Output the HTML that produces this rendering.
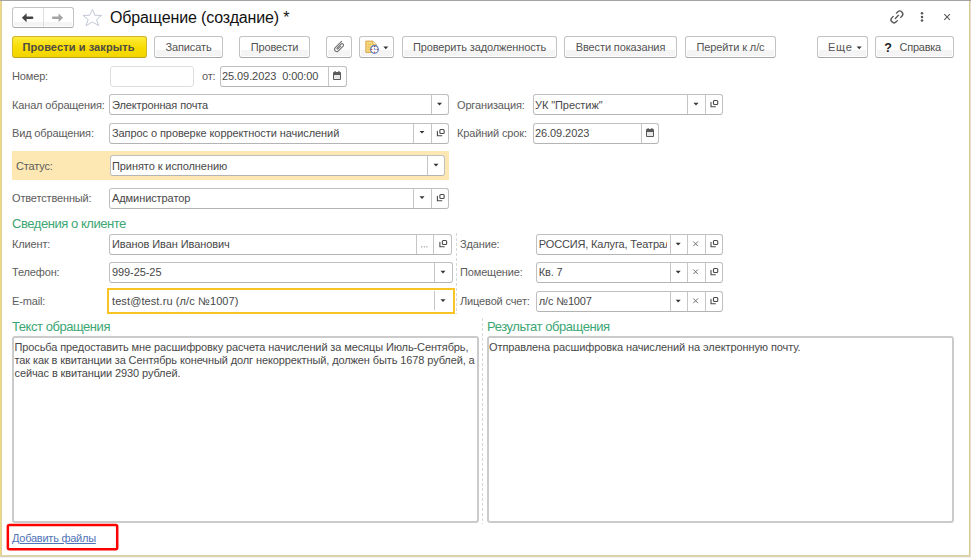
<!DOCTYPE html>
<html><head><meta charset="utf-8"><style>
*{box-sizing:border-box;margin:0;padding:0}
html,body{width:971px;height:558px;overflow:hidden;background:#fff}
body{position:relative;font-family:"Liberation Sans",sans-serif;font-size:11px;color:#333}
.a{position:absolute}
.t{position:absolute;white-space:pre;line-height:1}
.lbl{color:#5c5c5c}
.val{color:#484848}
.btn{position:absolute;border:1px solid #c3c3c3;border-bottom-color:#a8a8a8;border-radius:3px;
 background:linear-gradient(#fff 0,#fff 13px,#f4f4f4 13px,#f4f4f4 100%);box-shadow:inset 1px 0 #fff,inset -1px 0 #fff,inset 0 -1px #fff;
 color:#525252;text-align:center;white-space:pre;letter-spacing:-0.12px}
.fld{position:absolute;border:1px solid #c0c0c0;border-bottom-color:#b4b4b4;border-radius:3px;background:#fff}
.sec{color:#3ca673}
</style></head><body>
<div class="a" style="left:0px;top:0px;width:971px;height:1px;background:#a3a3a3"></div>
<div class="a" style="left:0px;top:1px;width:1px;height:556px;background:#f0d983"></div>
<div class="a" style="left:1px;top:1px;width:1px;height:554px;background:#dcd09e"></div>
<div class="a" style="left:969px;top:1px;width:1px;height:556px;background:#dbc98a"></div>
<div class="a" style="left:970px;top:1px;width:1px;height:556px;background:#e6ded2"></div>
<div class="a" style="left:0px;top:555px;width:970px;height:2px;background:#ddd3a6"></div>
<div class="a" style="left:0px;top:557px;width:971px;height:1px;background:#eef0f8"></div>
<div class="btn" style="left:12px;top:7px;width:62px;height:21px;background:linear-gradient(#fff 0,#fff 14px,#f4f4f4 14px,#f4f4f4 100%)"></div>
<div class="a" style="left:43px;top:8px;width:1px;height:19px;background:#dedede"></div>
<div class="t" style="left:110px;top:10.36px;font-size:16px;color:#111;letter-spacing:-0.14px">Обращение (создание) *</div>
<div class="btn" style="left:12px;top:36px;width:135px;height:22px;border-color:#cfb52a;border-bottom-color:#b8a020;background:linear-gradient(#ffeb3c,#f7dc00 55%,#f2d500);box-shadow:none;color:#4f4c44;font-weight:bold;line-height:20px;text-align:left;padding-left:9.5px;letter-spacing:0.1px">Провести и закрыть</div>
<div class="btn" style="left:154px;top:36px;width:69px;height:22px;line-height:20px;">Записать</div>
<div class="btn" style="left:239px;top:36px;width:71px;height:22px;line-height:20px;">Провести</div>
<div class="btn" style="left:326px;top:36px;width:26px;height:22px;line-height:20px;"></div>
<div class="btn" style="left:359px;top:36px;width:35px;height:22px;line-height:20px;"></div>
<div class="btn" style="left:402px;top:36px;width:155px;height:22px;line-height:20px;">Проверить задолженность</div>
<div class="btn" style="left:564px;top:36px;width:113px;height:22px;line-height:20px;">Ввести показания</div>
<div class="btn" style="left:685px;top:36px;width:91px;height:22px;line-height:20px;">Перейти к л/с</div>
<div class="btn" style="left:816.5px;top:36px;width:51.5px;height:22px;line-height:20px;text-align:left;padding-left:10.5px;letter-spacing:0.7px">Еще</div>
<div class="btn" style="left:875px;top:36px;width:79px;height:22px;line-height:20px;"></div>
<div class="t" style="left:884.3px;top:41.62px;font-size:12.5px;color:#1a1a1a;font-weight:bold">?</div>
<div class="t" style="left:899.5px;top:41.89px;font-size:11px;color:#525252;letter-spacing:-0.25px">Справка</div>
<div class="t lbl" style="left:12px;top:70.89px;font-size:11px;letter-spacing:-0.15px">Номер:</div>
<div class="fld" style="left:110px;top:66px;width:84px;height:21px;border-color:#dedede"></div>
<div class="t lbl" style="left:202px;top:70.89px;font-size:11px;letter-spacing:-0.15px">от:</div>
<div class="fld" style="left:220px;top:66px;width:127px;height:21px;"></div>
<div class="t val" style="left:222px;top:70.89px;font-size:11px;letter-spacing:-0.08px;">25.09.2023  0:00:00</div>
<div class="a" style="left:328px;top:67px;width:1px;height:19px;background:#c6c6c6"></div>
<div class="t lbl" style="left:12px;top:99.89px;font-size:11px;letter-spacing:-0.15px">Канал обращения:</div>
<div class="fld" style="left:109px;top:94px;width:340px;height:21px;"></div>
<div class="t val" style="left:112px;top:99.89px;font-size:11px;letter-spacing:-0.08px;letter-spacing:-0.12px">Электронная почта</div>
<div class="a" style="left:431px;top:95px;width:1px;height:19px;background:#c6c6c6"></div>
<div class="t lbl" style="left:457px;top:99.89px;font-size:11px;letter-spacing:-0.15px">Организация:</div>
<div class="fld" style="left:533px;top:94px;width:190px;height:21px;"></div>
<div class="t val" style="left:535px;top:99.89px;font-size:11px;letter-spacing:-0.08px;">УК "Престиж"</div>
<div class="a" style="left:687px;top:95px;width:1px;height:19px;background:#c6c6c6"></div>
<div class="a" style="left:704.5px;top:95px;width:1px;height:19px;background:#c6c6c6"></div>
<div class="t lbl" style="left:12px;top:127.89px;font-size:11px;letter-spacing:-0.15px">Вид обращения:</div>
<div class="fld" style="left:109px;top:123px;width:340px;height:21px;"></div>
<div class="t val" style="left:112px;top:127.89px;font-size:11px;letter-spacing:-0.08px;">Запрос о проверке корректности начислений</div>
<div class="a" style="left:413px;top:124px;width:1px;height:19px;background:#c6c6c6"></div>
<div class="a" style="left:431px;top:124px;width:1px;height:19px;background:#c6c6c6"></div>
<div class="t lbl" style="left:457px;top:127.89px;font-size:11px;letter-spacing:-0.15px">Крайний срок:</div>
<div class="fld" style="left:533px;top:123px;width:126px;height:21px;"></div>
<div class="t val" style="left:535px;top:127.89px;font-size:11px;letter-spacing:-0.08px;">26.09.2023</div>
<div class="a" style="left:641px;top:124px;width:1px;height:19px;background:#c6c6c6"></div>
<div class="a" style="left:12px;top:151px;width:437px;height:29px;background:#fde8b4"></div>
<div class="t lbl" style="left:16px;top:160.89px;font-size:11px;letter-spacing:-0.15px">Статус:</div>
<div class="fld" style="left:110px;top:155px;width:335px;height:21px;"></div>
<div class="t val" style="left:112px;top:160.89px;font-size:11px;letter-spacing:-0.08px;">Принято к исполнению</div>
<div class="a" style="left:427px;top:156px;width:1px;height:19px;background:#c6c6c6"></div>
<div class="t lbl" style="left:12px;top:192.89px;font-size:11px;letter-spacing:-0.15px">Ответственный:</div>
<div class="fld" style="left:109px;top:188px;width:340px;height:21px;"></div>
<div class="t val" style="left:112px;top:192.89px;font-size:11px;letter-spacing:-0.08px;">Администратор</div>
<div class="a" style="left:413px;top:189px;width:1px;height:19px;background:#c6c6c6"></div>
<div class="a" style="left:431px;top:189px;width:1px;height:19px;background:#c6c6c6"></div>
<div class="t sec" style="left:12px;top:216.9px;font-size:13px;letter-spacing:-0.45px">Сведения о клиенте</div>
<div class="t lbl" style="left:12px;top:238.89px;font-size:11px;letter-spacing:-0.15px">Клиент:</div>
<div class="fld" style="left:109px;top:234px;width:343px;height:21px;"></div>
<div class="t val" style="left:112px;top:238.89px;font-size:11px;letter-spacing:-0.08px;">Иванов Иван Иванович</div>
<div class="a" style="left:416px;top:235px;width:1px;height:19px;background:#c6c6c6"></div>
<div class="a" style="left:433px;top:235px;width:1px;height:19px;background:#c6c6c6"></div>
<div class="t lbl" style="left:12px;top:266.89px;font-size:11px;letter-spacing:-0.15px">Телефон:</div>
<div class="fld" style="left:109px;top:262px;width:344px;height:21px;"></div>
<div class="t val" style="left:112px;top:266.89px;font-size:11px;letter-spacing:-0.08px;">999-25-25</div>
<div class="a" style="left:434px;top:263px;width:1px;height:19px;background:#c6c6c6"></div>
<div class="t lbl" style="left:12px;top:295.89px;font-size:11px;letter-spacing:-0.15px">E-mail:</div>
<div class="a" style="left:107px;top:288px;width:348px;height:26px;border:2px solid #f7c423;background:#fff"></div>
<div class="t val" style="left:112px;top:295.89px;font-size:11px;letter-spacing:-0.08px;letter-spacing:0.1px">test@test.ru (л/с №1007)</div>
<div class="a" style="left:434px;top:291px;width:1px;height:19px;background:#c6c6c6"></div>
<div class="a" style="left:456px;top:233px;width:1px;height:81px;background:repeating-linear-gradient(#d8d8d8 0 3px,transparent 3px 5px)"></div>
<div class="a" style="left:482px;top:318px;width:1px;height:206px;background:repeating-linear-gradient(#d8d8d8 0 3px,transparent 3px 5px)"></div>
<div class="t lbl" style="left:460px;top:238.89px;font-size:11px;letter-spacing:-0.15px">Здание:</div>
<div class="fld" style="left:536px;top:234px;width:187px;height:21px;"></div>
<div class="t val" style="left:538.8px;top:238.89px;width:128.5px;overflow:hidden;letter-spacing:-0.15px">РОССИЯ, Калуга, Театральная</div>
<div class="a" style="left:670px;top:235px;width:1px;height:19px;background:#c6c6c6"></div>
<div class="a" style="left:687px;top:235px;width:1px;height:19px;background:#c6c6c6"></div>
<div class="a" style="left:704.5px;top:235px;width:1px;height:19px;background:#c6c6c6"></div>
<div class="t lbl" style="left:460px;top:266.89px;font-size:11px;letter-spacing:-0.15px">Помещение:</div>
<div class="fld" style="left:536px;top:262px;width:187px;height:21px;"></div>
<div class="t val" style="left:538.8px;top:266.89px;width:128.5px;overflow:hidden;letter-spacing:-0.15px">Кв. 7</div>
<div class="a" style="left:670px;top:263px;width:1px;height:19px;background:#c6c6c6"></div>
<div class="a" style="left:687px;top:263px;width:1px;height:19px;background:#c6c6c6"></div>
<div class="a" style="left:704.5px;top:263px;width:1px;height:19px;background:#c6c6c6"></div>
<div class="t lbl" style="left:460px;top:295.89px;font-size:11px;letter-spacing:-0.15px">Лицевой счет:</div>
<div class="fld" style="left:536px;top:291px;width:187px;height:21px;"></div>
<div class="t val" style="left:538.8px;top:295.89px;width:128.5px;overflow:hidden;letter-spacing:-0.15px">л/с №1007</div>
<div class="a" style="left:670px;top:292px;width:1px;height:19px;background:#c6c6c6"></div>
<div class="a" style="left:687px;top:292px;width:1px;height:19px;background:#c6c6c6"></div>
<div class="a" style="left:704.5px;top:292px;width:1px;height:19px;background:#c6c6c6"></div>
<div class="t sec" style="left:12px;top:319.7px;font-size:13px;letter-spacing:-0.45px">Текст обращения</div>
<div class="t sec" style="left:487px;top:319.7px;font-size:13px;letter-spacing:-0.45px">Результат обращения</div>
<div class="a" style="left:12px;top:336px;width:467px;height:187px;border:2px solid #cbcbcb;border-radius:3px"></div>
<div class="a" style="left:487px;top:336px;width:467px;height:187px;border:2px solid #cbcbcb;border-radius:3px"></div>
<div class="t val" style="left:14.5px;top:341.99px;font-size:11px;letter-spacing:-0.11px">Просьба предоставить мне расшифровку расчета начислений за месяцы Июль-Сентябрь,</div>
<div class="t val" style="left:14.5px;top:355.09px;font-size:11px;letter-spacing:-0.11px">так как в квитанции за Сентябрь конечный долг некорректный, должен быть 1678 рублей, а</div>
<div class="t val" style="left:14.5px;top:368.19px;font-size:11px;letter-spacing:-0.11px">сейчас в квитанции 2930 рублей.</div>
<div class="t val" style="left:489px;top:341.99px;font-size:11px;letter-spacing:-0.1px">Отправлена расшифровка начислений на электронную почту.</div>
<div class="t" style="left:12px;top:533.09px;font-size:11px;color:#4f73b8;text-decoration:underline;letter-spacing:-0.25px">Добавить файлы</div>
<svg class="a" style="left:0;top:0" width="971" height="558" viewBox="0 0 971 558"><path d="M21.9 17.7 L26.6 13.3 L26.6 16.4 L32.2 16.4 Q33.4 16.4 33.4 17.7 Q33.4 19 32.2 19 L26.6 19 L26.6 22.2 Z" fill="#444"/><path d="M63 17.7 L58.6 13.6 L58.6 16.5 L53 16.5 Q52 16.5 52 17.7 Q52 18.9 53 18.9 L58.6 18.9 L58.6 22 Z" fill="#a3a3a3"/><path d="M92.5 9.3 L94.8 15.3 L101.6 15.4 L96.5 19.6 L98.6 25.6 L92.5 22 L86 25.7 L88.2 19.6 L83 15.4 L89.6 15.3 Z" fill="none" stroke="#c3c8d6" stroke-width="1" stroke-linejoin="round"/><g transform="translate(896.9 16.9) rotate(45)" fill="none" stroke="#585858" stroke-width="1.35" stroke-linecap="round"><path d="M-3 2.3 V4 A3 3 0 0 0 3 4 V2.3"/><path d="M-3 -2.3 V-4 A3 3 0 0 1 3 -4 V-2.3"/><path d="M0 2.2 V-2.2"/></g><circle cx="922" cy="13.3" r="1.25" fill="#555"/><circle cx="922" cy="16.9" r="1.25" fill="#555"/><circle cx="922" cy="20.5" r="1.25" fill="#555"/><path d="M944.3 14.2 L949.9 19.8 M949.9 14.2 L944.3 19.8" stroke="#5a5a5a" stroke-width="1.1"/><g transform="translate(339 47.1) rotate(45) scale(0.9)" fill="none" stroke="#6a6a6a" stroke-width="1.1" stroke-linecap="round"><path d="M-2.5 -6.6 V3.4 A2.5 2.5 0 0 0 2.5 3.4 V-4 A1.6 1.6 0 0 0 -0.7 -4 V2.3 A0.7 0.7 0 0 0 0.7 2.3 V-2"/></g><path d="M365.8 41.1 L372.8 41.1 L376.4 44.7 L376.4 52.4 L365.8 52.4 Z" fill="#f7d77c" stroke="#d6a044" stroke-width="0.9"/><path d="M372.8 41.1 L372.8 44.7 L376.4 44.7" fill="#fbeab8" stroke="#d6a044" stroke-width="0.7"/><path d="M367.5 44.5 H371 M367.5 47 H370.5 M367.5 49.5 H370" stroke="#e3b455" stroke-width="0.7"/><circle cx="374.5" cy="49.4" r="3.8" fill="#fff" stroke="#4672c4" stroke-width="1.1"/><circle cx="374.5" cy="46.6" r="0.65" fill="#c03030"/><circle cx="374.5" cy="52.2" r="0.65" fill="#c03030"/><circle cx="371.7" cy="49.4" r="0.65" fill="#c03030"/><circle cx="377.3" cy="49.4" r="0.65" fill="#c03030"/><path d="M374.5 48.2 V49.5 H375.6" stroke="#4672c4" stroke-width="0.8" fill="none"/><path d="M383.3 46.5 L388.3 46.5 L385.8 49.199999999999996 Z" fill="#333"/><path d="M856.7 46.5 L861.7 46.5 L859.2 49.199999999999996 Z" fill="#333"/><rect x="333" y="72" width="8" height="8" rx="1" fill="#5a5a5a"/><rect x="334" y="75" width="6" height="4" fill="#e6e6e6"/><rect x="334.5" y="71" width="1.2" height="2" fill="#5a5a5a"/><rect x="338.3" y="71" width="1.2" height="2" fill="#5a5a5a"/><path d="M437.0 102.7 L442.0 102.7 L439.5 105.4 Z" fill="#333"/><path d="M693.5 102.7 L698.5 102.7 L696 105.4 Z" fill="#333"/><rect x="713.4499999999999" y="100.45" width="4.3" height="4.1" rx="1" fill="none" stroke="#4a4a4a" stroke-width="1.1"/><path d="M711.0 102.4 V106.7 H715.4" fill="none" stroke="#4a4a4a" stroke-width="1.1" stroke-linecap="round"/><path d="M419.5 130.89999999999998 L424.5 130.89999999999998 L422 133.6 Z" fill="#333"/><rect x="439.85" y="129.45000000000002" width="4.3" height="4.1" rx="1" fill="none" stroke="#4a4a4a" stroke-width="1.1"/><path d="M437.40000000000003 131.4 V135.70000000000002 H441.8" fill="none" stroke="#4a4a4a" stroke-width="1.1" stroke-linecap="round"/><rect x="646" y="129" width="8" height="8" rx="1" fill="#5a5a5a"/><rect x="647" y="132" width="6" height="4" fill="#e6e6e6"/><rect x="647.5" y="128" width="1.2" height="2" fill="#5a5a5a"/><rect x="651.3" y="128" width="1.2" height="2" fill="#5a5a5a"/><path d="M433.5 163.7 L438.5 163.7 L436 166.4 Z" fill="#333"/><path d="M419.5 196.2 L424.5 196.2 L422 198.9 Z" fill="#333"/><rect x="439.85" y="194.45000000000002" width="4.3" height="4.1" rx="1" fill="none" stroke="#4a4a4a" stroke-width="1.1"/><path d="M437.40000000000003 196.4 V200.70000000000002 H441.8" fill="none" stroke="#4a4a4a" stroke-width="1.1" stroke-linecap="round"/><rect x="421.2" y="246.2" width="1" height="1.2" fill="#8a8a8a"/><rect x="423.8" y="246.2" width="1" height="1.2" fill="#8a8a8a"/><rect x="426.4" y="246.2" width="1" height="1.2" fill="#8a8a8a"/><rect x="442.35" y="240.45000000000002" width="4.3" height="4.1" rx="1" fill="none" stroke="#4a4a4a" stroke-width="1.1"/><path d="M439.90000000000003 242.4 V246.70000000000002 H444.3" fill="none" stroke="#4a4a4a" stroke-width="1.1" stroke-linecap="round"/><path d="M440.5 270.7 L445.5 270.7 L443 273.4 Z" fill="#333"/><path d="M440.5 299.2 L445.5 299.2 L443 301.9 Z" fill="#333"/><path d="M675.7 242.7 L680.7 242.7 L678.2 245.4 Z" fill="#333"/><path d="M693.3000000000001 241.5 L697.9 246.10000000000002 M697.9 241.5 L693.3000000000001 246.10000000000002" stroke="#707070" stroke-width="1"/><rect x="713.4499999999999" y="240.45000000000002" width="4.3" height="4.1" rx="1" fill="none" stroke="#4a4a4a" stroke-width="1.1"/><path d="M711.0 242.4 V246.70000000000002 H715.4" fill="none" stroke="#4a4a4a" stroke-width="1.1" stroke-linecap="round"/><path d="M675.7 270.7 L680.7 270.7 L678.2 273.4 Z" fill="#333"/><path d="M693.3000000000001 269.5 L697.9 274.1 M697.9 269.5 L693.3000000000001 274.1" stroke="#707070" stroke-width="1"/><rect x="713.4499999999999" y="268.45" width="4.3" height="4.1" rx="1" fill="none" stroke="#4a4a4a" stroke-width="1.1"/><path d="M711.0 270.4 V274.7 H715.4" fill="none" stroke="#4a4a4a" stroke-width="1.1" stroke-linecap="round"/><path d="M675.7 299.7 L680.7 299.7 L678.2 302.4 Z" fill="#333"/><path d="M693.3000000000001 298.5 L697.9 303.1 M697.9 298.5 L693.3000000000001 303.1" stroke="#707070" stroke-width="1"/><rect x="713.4499999999999" y="297.45" width="4.3" height="4.1" rx="1" fill="none" stroke="#4a4a4a" stroke-width="1.1"/><path d="M711.0 299.4 V303.7 H715.4" fill="none" stroke="#4a4a4a" stroke-width="1.1" stroke-linecap="round"/><rect x="7.85" y="525" width="109.35" height="24.25" rx="1.5" fill="none" stroke="#ff0000" stroke-width="2.5"/></svg>
</body></html>
